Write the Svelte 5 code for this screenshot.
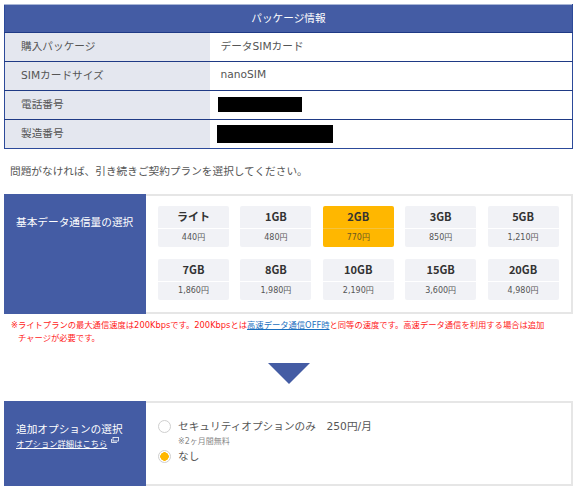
<script>
	const info = [
		{ label: '購入パッケージ', value: 'データSIMカード' },
		{ label: 'SIMカードサイズ', value: 'nanoSIM' },
		{ label: '電話番号', mask: 'mask-tel' },
		{ label: '製造番号', mask: 'mask-serial' }
	];

	const plans = [
		{ name: 'ライト', price: '440円' },
		{ name: '1GB', price: '480円' },
		{ name: '2GB', price: '770円', active: true },
		{ name: '3GB', price: '850円' },
		{ name: '5GB', price: '1,210円' },
		{ name: '7GB', price: '1,860円' },
		{ name: '8GB', price: '1,980円' },
		{ name: '10GB', price: '2,190円' },
		{ name: '15GB', price: '3,600円' },
		{ name: '20GB', price: '4,980円' }
	];
</script>

<main>
	<table>
		<colgroup>
			<col class="col-key" />
			<col />
		</colgroup>
		<thead>
			<tr><th colspan="2">パッケージ情報</th></tr>
		</thead>
		<tbody>
			{#each info as row}
				<tr>
					<td class="key">{row.label}</td>
					<td class="val">
						{#if row.mask}
							<span class={row.mask}></span>
						{:else}
							{row.value}
						{/if}
					</td>
				</tr>
			{/each}
		</tbody>
	</table>

	<p class="lead">問題がなければ、引き続きご契約プランを選択してください。</p>

	<section class="panel plans">
		<div class="side">
			<div class="side-title">基本データ通信量の選択</div>
		</div>
		<div class="plan-grid">
			{#each plans as plan}
				<div class="tile" class:active={plan.active}>
					<div class="tile-name">{plan.name}</div>
					<div class="tile-price">{plan.price}</div>
				</div>
			{/each}
		</div>
	</section>

	<p class="note">※ライトプランの最大通信速度は200Kbpsです。200Kbpsとは<a href="#off">高速データ通信OFF時</a>と同等の速度です。高速データ通信を利用する場合は追加チャージが必要です。</p>

	<div class="arrow"></div>

	<section class="panel options">
		<div class="side">
			<div class="side-title">追加オプションの選択</div>
			<a class="side-link" href="#detail">オプション詳細はこちら</a>
			<svg class="ext" width="8" height="6" viewBox="0 0 8 6">
				<rect x="2" y="0.5" width="5.5" height="3.5" fill="none" stroke="#fff" stroke-width="0.8" />
				<path d="M0.5 2v3.5h5.5" fill="none" stroke="#fff" stroke-width="0.8" />
			</svg>
		</div>
		<div class="option-list">
			<div class="option">
				<span class="radio"></span>
				<span>セキュリティオプションのみ　250円/月</span>
			</div>
			<div class="option-sub">※2ヶ月間無料</div>
			<div class="option">
				<span class="radio on"></span>
				<span>なし</span>
			</div>
		</div>
	</section>
</main>

<style>
	:global(body) {
		background: #fff;
	}

	main {
		width: 569px;
		height: 487px;
		padding: 4px 0 0 4px;
		font-family: 'DejaVu Sans', 'Noto Sans CJK JP', sans-serif;
		font-size: 10.67px;
		color: #555;
	}

	table {
		width: 569px;
		border-collapse: collapse;
		table-layout: fixed;
		border: 1px solid #2c4a9a;
		border-top-color: #a9b6d6;
	}

	.col-key {
		width: 205px;
	}

	th {
		height: 28px;
		padding: 0 0 2px;
		box-sizing: border-box;
		background: #445ca4;
		color: #fff;
		font-weight: 400;
		text-align: center;
	}

	td {
		height: 29px;
		padding: 0 0 3px;
		box-sizing: border-box;
		border-top: 1px solid #1f3a85;
	}

	.key {
		padding-left: 16px;
		background: #e4e7ef;
	}

	.val {
		padding-left: 11px;
	}

	.mask-tel,
	.mask-serial {
		display: block;
		background: #000;
	}

	.mask-tel {
		width: 84px;
		height: 15px;
		margin: 2px 0 0 -3px;
	}

	.mask-serial {
		width: 116px;
		height: 18px;
		margin: 2px 0 0 -4px;
	}

	.lead {
		margin: 15px 0 15px 6px;
		line-height: 15px;
	}

	.panel {
		display: flex;
		width: 569px;
		box-sizing: border-box;
		border: 2px solid #e6e6e6;
		border-left: 0;
	}

	.side {
		flex: none;
		width: 142px;
		margin: -2px 0;
		padding-left: 12px;
		box-sizing: border-box;
		background: #445ca4;
		color: #fff;
	}

	.plans {
		height: 120px;
	}

	.plans .side-title {
		margin-top: 21px;
		line-height: 16px;
	}

	.plan-grid {
		display: grid;
		grid-template-columns: repeat(5, 71px);
		grid-auto-rows: 41px;
		column-gap: 11.4px;
		row-gap: 12px;
		padding: 10px 0 0 12px;
	}

	.tile {
		display: flex;
		flex-direction: column;
		border-radius: 2px;
		background: #f1f2f6;
		text-align: center;
	}

	.tile-name {
		height: 22px;
		border-bottom: 1px solid #fff;
		font-family: 'Noto Sans CJK JP', sans-serif;
		font-size: 11px;
		font-weight: 700;
		line-height: 21px;
		color: #333;
	}

	.tile-price {
		font-size: 8px;
		line-height: 18px;
		color: #555;
	}

	.tile.active {
		background: #ffb700;
	}

	.tile.active .tile-name {
		border-bottom-color: #f5c33d;
	}

	.tile.active .tile-price {
		color: #6b5a22;
	}

	.note {
		margin: 5px 0 0 7px;
		width: 532px;
		padding-left: 7px;
		text-indent: -7px;
		font-size: 8.3px;
		line-height: 13px;
		color: #ff1a1a;
	}

	.note a {
		color: #1a6fc0;
		text-decoration: underline;
	}

	.arrow {
		width: 0;
		height: 0;
		margin: 18px 0 17px 264px;
		border-top: 21px solid #445ca4;
		border-left: 21px solid transparent;
		border-right: 21px solid transparent;
	}

	.options {
		height: 85px;
	}

	.options .side-title {
		margin-top: 21px;
		line-height: 15px;
	}

	.side-link {
		font-size: 8.3px;
		line-height: 12px;
		color: #fff;
		text-decoration: underline;
	}

	.ext {
		vertical-align: 4px;
	}

	.option-list {
		padding: 16px 0 0 12px;
	}

	.option {
		display: flex;
		align-items: center;
		gap: 7px;
		height: 15px;
		line-height: 15px;
		color: #555;
	}

	.option-sub {
		height: 15px;
		padding-left: 20px;
		font-size: 8px;
		line-height: 15px;
		color: #888;
	}

	.radio {
		flex: none;
		width: 13px;
		height: 13px;
		box-sizing: border-box;
		border: 1px solid #cfcfcf;
		border-radius: 50%;
		background: #fff;
	}

	.radio.on {
		background: radial-gradient(circle, #ffb700 0 4px, #fff 4.5px);
	}
</style>
